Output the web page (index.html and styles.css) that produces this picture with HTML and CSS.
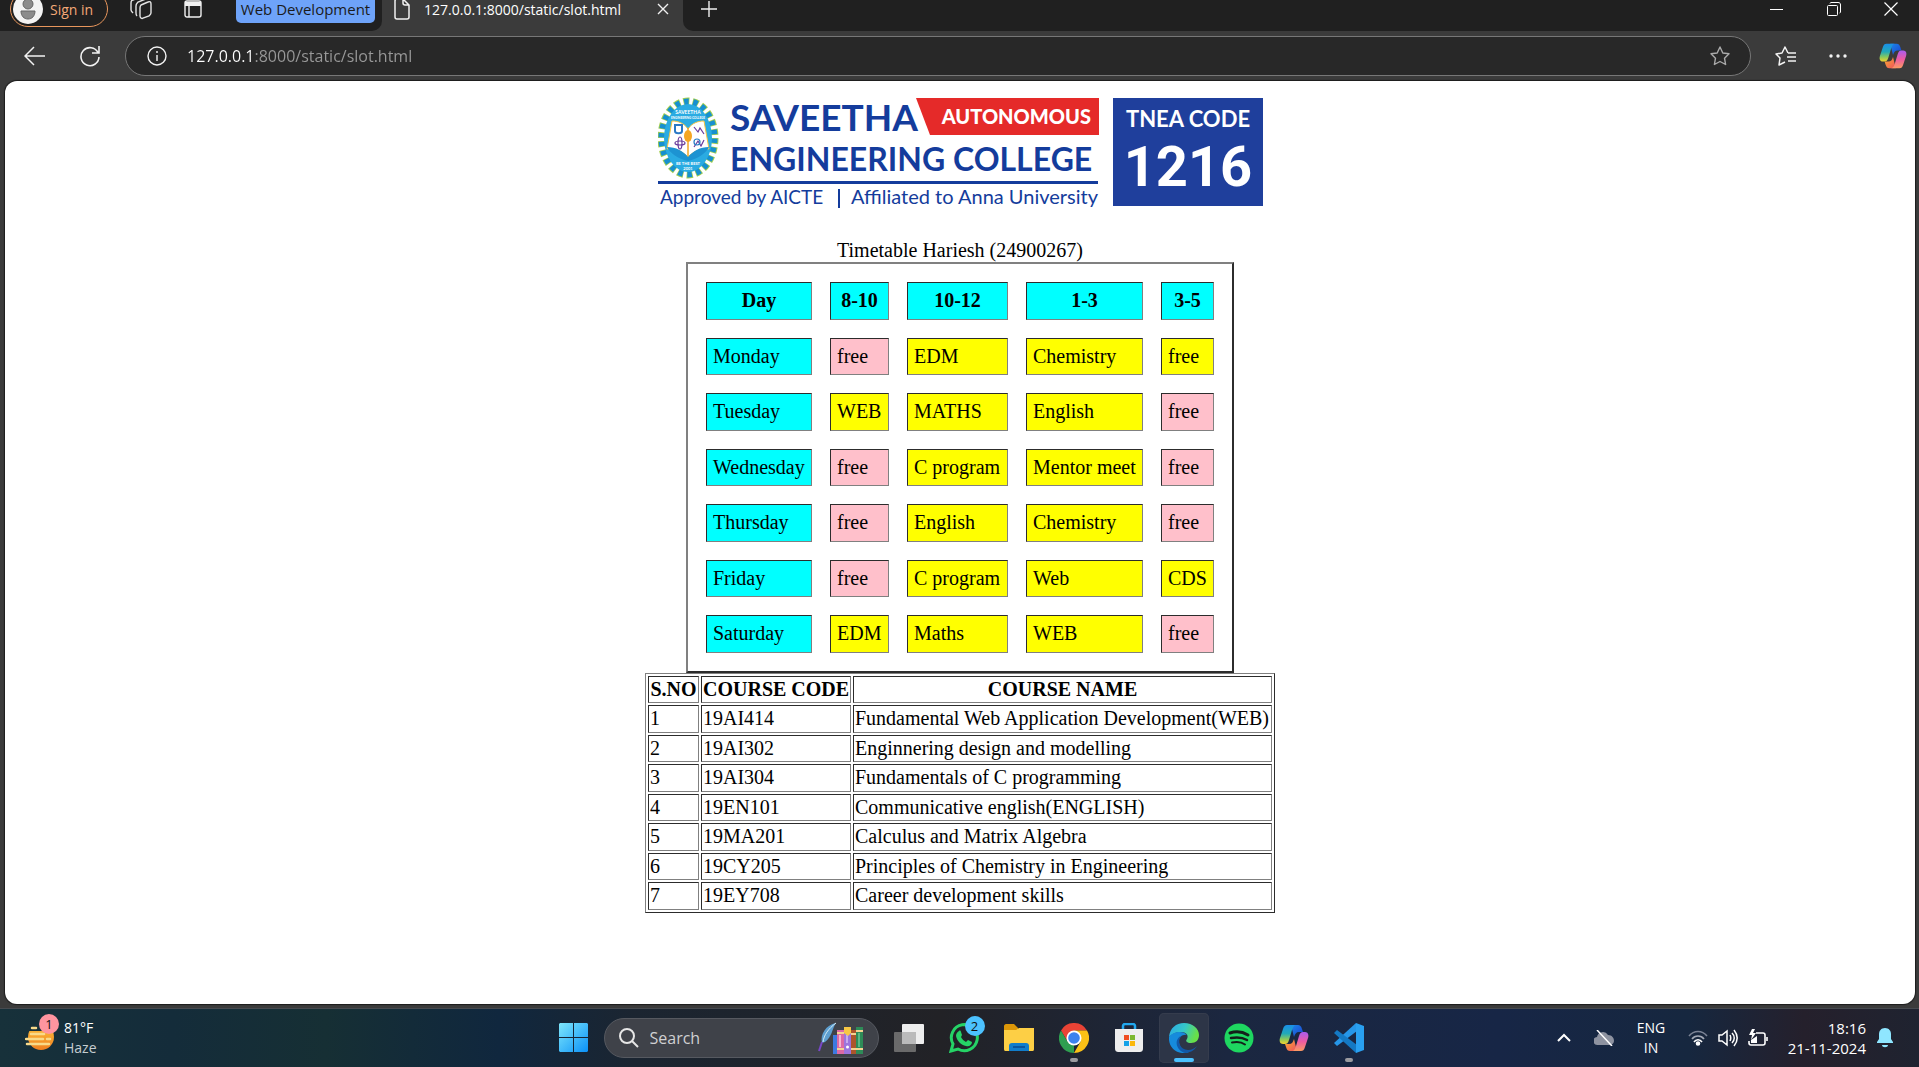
FILE: index.html
```html
<!DOCTYPE html>
<html lang="en">
<head>
<meta charset="utf-8">
<title>127.0.0.1:8000/static/slot.html</title>
<link rel="stylesheet" href="styles.css">
</head>
<body>
<svg class="defs" aria-hidden="true">
  <defs>
    <linearGradient id="cpA" x1="0" y1="0" x2="0" y2="1"><stop offset="0" stop-color="#1a8fe8"/><stop offset=".45" stop-color="#22a9b8"/><stop offset=".75" stop-color="#8cc95a"/><stop offset="1" stop-color="#f5d32e"/></linearGradient>
    <linearGradient id="cpB" x1="0" y1="0" x2="0" y2="1"><stop offset="0" stop-color="#a95cf0"/><stop offset=".5" stop-color="#ee5ba2"/><stop offset="1" stop-color="#fb9a62"/></linearGradient>
    <linearGradient id="cpC" x1="0" y1="0" x2="1" y2="1"><stop offset="0" stop-color="#1c86e8"/><stop offset="1" stop-color="#1b3fce"/></linearGradient>
    <linearGradient id="cpD" x1="0" y1="0" x2="1" y2="1"><stop offset="0" stop-color="#fbb02d"/><stop offset="1" stop-color="#ee4f5f"/></linearGradient>
    <symbol id="copilot" viewBox="0 0 30 28">
      <path fill="url(#cpC)" d="M12 1h7c2 0 3 1 4 4l1 3h-4c-3 0-4 2-5 5z"/>
      <path fill="url(#cpD)" d="M18 27h-7c-2 0-3-1-4-4l-1-3h4c3 0 4-2 5-5z"/>
      <path fill="url(#cpA)" d="M8 1h9c-2 0-3 2-4 5l-3 10c-1 3-2 4-4 4H4c-3 0-4-3-3-6L4 5c1-3 2-4 4-4z"/>
      <path fill="url(#cpB)" d="M22 27h-9c2 0 3-2 4-5l3-10c1-3 2-4 4-4h2c3 0 4 3 3 6l-3 9c-1 3-2 4-4 4z"/>
    </symbol>
  </defs>
</svg>

<header class="browser">
  <div class="tabstrip">
    <div class="tabstrip-left">
      <button class="signin" type="button">
        <svg width="30" height="30" viewBox="0 0 30 30"><circle cx="15" cy="15" r="15" fill="#f4f4f4"/><circle cx="15" cy="10" r="5" fill="#8c8c8c" stroke="#666"/><path d="M8 17h14c0 5-3 8-7 8s-7-3-7-8z" fill="#8c8c8c" stroke="#666"/></svg>
        <span>Sign in</span>
      </button>
      <button class="strip-icon" type="button" aria-label="Workspaces">
        <svg width="22" height="24" viewBox="0 0 22 24" fill="none" stroke="#e4e4e4" stroke-width="1.4"><path d="M11 8l7-3c2-1 3 0 3 2v9c0 1-1 2-2 3l-6 2c-1 1-3 0-3-2v-8c0-1 0-2 1-3zM7 19c-1-1-1-2-1-3V9c0-2 1-3 2-4l8-3M3 16c-1-1-2-2-2-3V6c0-2 1-3 2-3l8-3"/></svg>
      </button>
      <button class="strip-icon" type="button" aria-label="Tab actions">
        <svg width="18" height="20" viewBox="0 0 18 20" fill="none" stroke="#f0f0f0" stroke-width="1.4"><rect x="1" y="2" width="16" height="16" rx="2"/><path d="M5 7v11" /><path d="M1 5h16" stroke-width="4"/></svg>
      </button>
      <button class="group" type="button">Web Development</button>
    </div>
    <div class="tab">
      <svg width="16" height="22" viewBox="0 0 16 22" fill="none" stroke="#f0f0f0" stroke-width="1.5"><path d="M1 3c0-1 1-2 2-2h6l6 6v12c0 1-1 2-2 2H3c-1 0-2-1-2-2zM9 1v4c0 1 1 2 2 2h4"/></svg>
      <span class="tab-title">127.0.0.1:8000/static/slot.html</span>
      <button class="tab-close" type="button" aria-label="Close tab"><svg width="12" height="12" viewBox="0 0 12 12" stroke="#f0f0f0" stroke-width="1.4"><path d="M1 1l10 10M11 1L1 11"/></svg></button>
    </div>
    <div class="tabstrip-right">
      <button class="newtab" type="button" aria-label="New tab"><svg width="16" height="16" viewBox="0 0 16 16" stroke="#f0f0f0" stroke-width="1.4"><path d="M8 0v16M0 8h16"/></svg></button>
      <div class="window-controls">
        <button type="button" aria-label="Minimize"><svg width="14" height="14" viewBox="0 0 14 14" stroke="#fff"><path d="M0 7.500h13"/></svg></button>
        <button type="button" aria-label="Restore"><svg width="14" height="14" viewBox="0 0 14 14" fill="none" stroke="#fff"><rect x=".5" y="3.500" width="10" height="10" rx="1"/><path d="M3 1.500c0-1 1-1 1-1h7c2 0 2.500 1 2.500 2.500V10c0 1-1 1-1 1"/></svg></button>
        <button type="button" aria-label="Close window"><svg width="14" height="14" viewBox="0 0 14 14" stroke="#fff" stroke-width="1.200"><path d="M.5.5l13 13M13.500.5l-13 13"/></svg></button>
      </div>
    </div>
  </div>
  <div class="toolbar">
    <button type="button" aria-label="Back"><svg width="22" height="20" viewBox="0 0 22 20" fill="none" stroke="#f2f2f2" stroke-width="1.500"><path d="M21 10H1M10 1l-9 9 9 9"/></svg></button>
    <button type="button" aria-label="Refresh"><svg width="22" height="22" viewBox="0 0 22 22" fill="none" stroke="#f2f2f2" stroke-width="1.600"><path d="M19 7.500A9 9 0 1 0 20 12M20 1v7h-7"/></svg></button>
    <div class="address">
      <svg width="20" height="20" viewBox="0 0 20 20" fill="none" stroke="#f2f2f2" stroke-width="1.400"><circle cx="10" cy="10" r="9"/><path d="M10 9v6M10 5v2"/></svg>
      <input type="text" aria-label="Address" value="127.0.0.1:8000/static/slot.html">
      <button type="button" aria-label="Add to favorites"><svg width="22" height="22" viewBox="0 0 22 22" fill="none" stroke="#aaa" stroke-width="1.400" stroke-linejoin="round"><path d="M11 2l2.800 6 6.200.800-4.500 4.400 1.100 6.300L11 16.500l-5.600 3 1.100-6.300L2 8.800 8.200 8z"/></svg></button>
    </div>
    <div class="toolbar-actions">
      <button type="button" aria-label="Favorites"><svg width="22" height="22" viewBox="0 0 22 22" fill="none" stroke="#f2f2f2" stroke-width="1.500" stroke-linejoin="round"><path d="M13 8l-3-6-3 6-6 1 4 4-1 7 6-3M21 8h-8M12 12h9M13 16h8"/></svg></button>
      <button type="button" aria-label="Settings and more"><svg width="18" height="6" viewBox="0 0 18 6" fill="#f2f2f2"><circle cx="2" cy="3" r="1.700"/><circle cx="9" cy="3" r="1.700"/><circle cx="16" cy="3" r="1.700"/></svg></button>
      <button type="button" aria-label="Copilot"><svg width="28" height="28"><use href="#copilot"/></svg></button>
    </div>
  </div>
</header>

<main class="page">
  <svg class="logo" width="605" height="116" viewBox="0 0 605 116" role="img" aria-label="Saveetha Engineering College">
    <ellipse cx="30" cy="41" rx="26" ry="36" fill="none" stroke="#a4cf4f" stroke-width="9" pathLength="44" stroke-dasharray="1.300 .7"/>
    <ellipse cx="30" cy="41" rx="26" ry="36" fill="none" stroke="#1790cf" stroke-width="7" pathLength="44" stroke-dasharray="1 1" stroke-dashoffset="-.15"/>
    <ellipse cx="30" cy="41" rx="24" ry="34" fill="#2aabe2"/>
    <path d="M14 24c6 0 12 2 16 8 4-6 10-8 16-8l5 28c-8-1-15 2-21 8-6-6-13-9-21-8z" fill="#fff" stroke="#f5c542" stroke-width="1"/>
    <path d="M9 50c9 0 16 4 21 10 5-6 12-10 21-10-3 6-11 12-21 14-10-2-18-8-21-14z" fill="#1d93d2"/>
    <path d="M30 31v28" stroke="#f5a623" stroke-width="1.500"/><ellipse cx="30" cy="39" rx="4" ry="6" fill="#f5a623"/>
    <path d="M17 28h7v6c0 3-7 3-7 0z" fill="none" stroke="#2a78c5" stroke-width="2"/>
    <g fill="none" stroke="#683a9b" stroke-width="1.200"><ellipse cx="22" cy="46" rx="2" ry="6"/><ellipse cx="22" cy="46" rx="5" ry="2"/><path d="M36 30l4 5 2-4 4 6M36 50l4-6 3 5 3-6"/><circle cx="39" cy="45" r="3" stroke="#267cc5"/></g>
    <text class="seal" x="30" y="17" font-size="5">SAVEETHA</text>
    <text class="seal" x="30" y="22" font-size="3">ENGINEERING COLLEGE</text>
    <text class="seal" x="30" y="68" font-size="4">BE THE BEST</text>
    <text class="seal" x="30" y="73" font-size="4">2001</text>
    <text class="name" x="72" y="34" font-size="37">SAVEETHA</text>
    <text class="name" x="72" y="74" font-size="32">ENGINEERING COLLEGE</text>
    <path d="M258 1h183v37H272z" fill="#e52a29"/>
    <text class="autonomous" x="433" y="27" font-size="20">AUTONOMOUS</text>
    <path d="M0 84h440v3H0z" fill="#143c9c"/>
    <text class="approved" x="2" y="107" font-size="19">Approved by AICTE</text>
    <path d="M181 92v19" stroke="#143c9c" stroke-width="2"/>
    <text class="approved affiliated" x="440" y="107" font-size="20">Affiliated to Anna University</text>
    <path d="M455 1h150v108H455z" fill="#1f3f9c"/>
    <text class="code-label" x="530" y="30" font-size="22">TNEA CODE</text>
    <text class="code" x="530" y="89" font-size="56">1216</text>
  </svg>

  <table class="timetable">
    <caption>Timetable Hariesh (24900267)</caption>
    <colgroup><col class="c-day"><col class="c-first"><col class="c-second"><col class="c-third"><col class="c-fourth"></colgroup>
    <tr><th>Day</th><th>8-10</th><th>10-12</th><th>1-3</th><th>3-5</th></tr>
    <tr><td class="day">Monday</td><td class="free">free</td><td>EDM</td><td>Chemistry</td><td>free</td></tr>
    <tr><td class="day">Tuesday</td><td>WEB</td><td>MATHS</td><td>English</td><td class="free">free</td></tr>
    <tr><td class="day">Wednesday</td><td class="free">free</td><td>C program</td><td>Mentor meet</td><td class="free">free</td></tr>
    <tr><td class="day">Thursday</td><td class="free">free</td><td>English</td><td>Chemistry</td><td class="free">free</td></tr>
    <tr><td class="day">Friday</td><td class="free">free</td><td>C program</td><td>Web</td><td>CDS</td></tr>
    <tr><td class="day">Saturday</td><td>EDM</td><td>Maths</td><td>WEB</td><td class="free">free</td></tr>
  </table>

  <table class="courses">
    <colgroup><col class="c-no"><col class="c-code"><col class="c-name"></colgroup>
    <tr><th>S.NO</th><th>COURSE CODE</th><th>COURSE NAME</th></tr>
    <tr><td>1</td><td>19AI414</td><td>Fundamental Web Application Development(WEB)</td></tr>
    <tr><td>2</td><td>19AI302</td><td>Enginnering design and modelling</td></tr>
    <tr><td>3</td><td>19AI304</td><td>Fundamentals of C programming</td></tr>
    <tr><td>4</td><td>19EN101</td><td>Communicative english(ENGLISH)</td></tr>
    <tr><td>5</td><td>19MA201</td><td>Calculus and Matrix Algebra</td></tr>
    <tr><td>6</td><td>19CY205</td><td>Principles of Chemistry in Engineering</td></tr>
    <tr><td>7</td><td>19EY708</td><td>Career development skills</td></tr>
  </table>
</main>

<footer class="taskbar">
  <button class="weather" type="button">
    <span class="weather-icon">
      <svg width="30" height="28" viewBox="0 0 30 28"><defs><linearGradient id="sun" x1="0" y1="0" x2="0" y2="1"><stop offset="0" stop-color="#fcc23c"/><stop offset="1" stop-color="#f08020"/></linearGradient></defs><circle cx="16" cy="13" r="13" fill="url(#sun)"/><path d="M0 0h30v7H0z" fill="#17303a"/><g stroke="#f8da8a" stroke-width="2.500" stroke-linecap="round"><path d="M7 4h4M6 10h13M1 15h17M22 15h3M2 20h22"/></g></svg>
      <span class="badge pink">1</span>
    </span>
    <span class="weather-text"><span>81°F</span><span class="muted">Haze</span></span>
  </button>

  <nav class="apps" aria-label="Taskbar apps">
    <button type="button" aria-label="Start"><svg width="30" height="30" viewBox="0 0 30 30"><defs><linearGradient id="win" gradientUnits="userSpaceOnUse" x1="0" y1="0" x2="29" y2="29"><stop offset="0" stop-color="#7fe7fb"/><stop offset="1" stop-color="#0a91f8"/></linearGradient></defs><path fill="url(#win)" d="M1 0h13v14H0V1zM15 0h13l1 1v13H15zM0 15h14v14H1l-1-1zM15 15h14v13l-1 1H15z"/></svg></button>
    <label class="search">
      <svg width="20" height="20" viewBox="0 0 20 20" fill="none" stroke="#e6e6e6" stroke-width="2"><circle cx="8" cy="8" r="7"/><path d="M13 13l6 6"/></svg>
      <input type="search" placeholder="Search" aria-label="Search">
      <svg width="46" height="32" viewBox="0 0 46 32"><path d="M18 1C8 3 2 12 4 21l3-1C14 15 14 7 18 1z" fill="#5d9fd0"/><path d="M18 1C10 7 6 13 5 20" stroke="#d4ecf6" fill="none"/><path d="M4 20l-3 9" stroke="#7848c8" stroke-width="2"/><path fill="#3d7ae0" d="M15 13h5v19h-5z"/><path fill="#dc6aa5" d="M19 8h7v24h-7z"/><path fill="#f3b6d4" d="M21 13h2v12h-2z"/><path fill="#9b75dd" d="M26 5h7v27h-7z"/><path fill="#c4abf0" d="M28 13h2v8h-2z"/><path fill="#ad552b" d="M33 8h5v24h-5z"/><path fill="#2e8b57" d="M38 5h7v27h-7z"/><path fill="#5cb884" d="M40 11h2v14h-2z"/><path d="M19 11h7M19 27h7M33 12h5M33 27h5M38 9h7M38 27h7" stroke="#f4d391" stroke-width="2"/><path d="M26 5h7v6l-3 3-4-3z" fill="#f7c744"/><circle cx="29.500" cy="25" r="1.500" fill="#fff"/></svg>
    </label>
    <button type="button" aria-label="Task view"><svg width="30" height="28" viewBox="0 0 30 28"><rect x="8" width="22" height="20" rx="1" fill="#eee"/><rect y="8" width="22" height="20" rx="1" fill="#777" fill-opacity=".85"/><path fill="#bbb" d="M8 8h14v12H8z"/></svg></button>
    <button type="button" aria-label="WhatsApp">
      <svg width="30" height="30" viewBox="0 0 30 30"><path d="M2 28l2-7A13 13 0 1 1 9 26z" fill="none" stroke="#25d366" stroke-width="3"/><path d="M10 8c1-1 2 0 2 1l1 3-1 2c1 2 3 4 5 5l2-2 4 2c0 3-3 5-6 4-5-1-9-5-10-10 0-2 1-4 3-5z" fill="#25d366"/></svg>
      <span class="badge blue">2</span>
    </button>
    <button type="button" aria-label="File Explorer"><svg width="30" height="28" viewBox="0 0 30 28"><path d="M0 2c0-1 1-2 2-2h8l4 4v5H0z" fill="#dc9708"/><path d="M0 6h12l3-2h15v21c0 2-1 2-2 2H2c-1 0-2 0-2-2z" fill="#fdcf45"/><path d="M5 27v-5c0-2 1-3 3-3h14c2 0 3 1 3 3v5z" fill="#117dcb"/><path d="M9 23h12" stroke="#0a569f" stroke-width="2"/></svg></button>
    <button class="open" type="button" aria-label="Chrome"><svg width="30" height="30" viewBox="0 0 30 30"><path d="M2 7.500a15 15 0 0 1 26 0H15l-6.500 11z" fill="#e94335"/><path d="M2 7.500l6.500 11.250L15 22.500 15 30A15 15 0 0 1 2 7.500z" fill="#2f9e50"/><path d="M28 7.500H15l6.500 11.250L15 30A15 15 0 0 0 28 7.500z" fill="#fbc116"/><circle cx="15" cy="15" r="7.500" fill="#fff"/><circle cx="15" cy="15" r="5.800" fill="#3c82ee"/></svg></button>
    <button type="button" aria-label="Microsoft Store"><svg width="30" height="30" viewBox="0 0 30 30"><path d="M9 7V3c0-1 1-2 2-2h8c1 0 2 1 2 2v4" fill="none" stroke="#22a8ee" stroke-width="2.500"/><path d="M1 6h28v19c0 3-1 4-4 4H5c-3 0-4-1-4-4z" fill="#eee"/><path fill="#f04e23" d="M10 12h5v5h-5z"/><path fill="#7cb82f" d="M16 12h5v5h-5z"/><path fill="#14a2e8" d="M10 18h5v5h-5z"/><path fill="#fbb80b" d="M16 18h5v5h-5z"/></svg></button>
    <button class="active" type="button" aria-label="Edge"><svg width="30" height="30" viewBox="0 0 30 30"><defs><linearGradient id="eg" x1="0" y1="0" x2="1" y2=".3"><stop offset="0" stop-color="#2aa8e8"/><stop offset=".55" stop-color="#35c8c8"/><stop offset="1" stop-color="#68e048"/></linearGradient></defs><path d="M0 14C1 5 7 0 15 0c9 0 15 6 15 12 0 5-3 8-8 8-4 0-6-2-4-4 2-4-1-7-6-7C6 9 2 12 0 14z" fill="url(#eg)"/><path d="M0 14c2-3 6-5 11-5 3 0 5 1 7 3-5-1-9 3-8 8 1 6 6 9 10 9-11 4-21-4-20-15z" fill="#168bdc"/><path d="M12 13c-4 5-1 14 7 14 4 0 7-2 9-4-3 5-8 7-12 7-8-2-12-13-4-17z" fill="#1259a8"/></svg></button>
    <button type="button" aria-label="Spotify"><svg width="30" height="30" viewBox="0 0 30 30"><circle cx="15" cy="15" r="14.500" fill="#1ed760"/><g fill="none" stroke="#14201a" stroke-linecap="round"><path d="M6 10c6-2 13-1 18 2" stroke-width="3"/><path d="M7 15c5-1 11-1 16 2" stroke-width="2.500"/><path d="M8 19.500c5-1 9-1 13 2" stroke-width="2"/></g></svg></button>
    <button type="button" aria-label="Copilot"><svg width="30" height="28"><use href="#copilot"/></svg></button>
    <button class="open" type="button" aria-label="Visual Studio Code"><svg width="30" height="30" viewBox="0 0 30 30"><path d="M22 0L0 20l3 3L23 8z" fill="#2696e8"/><path d="M22 30L0 10l3-3 20 15z" fill="#1479c4"/><path d="M22 0l8 3v24l-8 3z" fill="#29a0f0"/></svg></button>
  </nav>

  <div class="tray">
    <button type="button" aria-label="Show hidden icons"><svg width="14" height="10" viewBox="0 0 14 10" fill="none" stroke="#fff" stroke-width="2"><path d="M1 8l6-6 6 6"/></svg></button>
    <svg class="cloud" width="20" height="16" viewBox="0 0 20 16"><path d="M4 15a4 4 0 0 1-1-8 6 6 0 0 1 11-2c4 0 6 3 6 6 0 2-2 4-4 4z" fill="#8d92a0"/><path d="M3 0l15 16" stroke="#fff" stroke-width="1.500"/></svg>
    <button class="lang" type="button"><span>ENG</span><span>IN</span></button>
    <button class="status" type="button" aria-label="Network, volume and battery">
      <svg width="20" height="16" viewBox="0 0 20 16" fill="none" stroke="#fff" stroke-width="1.600"><path d="M1 6c5-6 13-6 18 0" stroke="#7c8496"/><path d="M4 9c3-4 9-4 12 0" stroke="#a5abb8"/><path d="M6 12c2-3 6-3 8 0"/><circle cx="10" cy="13.500" r="1.500" fill="#fff"/></svg>
      <svg width="20" height="18" viewBox="0 0 20 18" fill="none" stroke="#fff" stroke-width="1.500"><path d="M1 6h3l5-4v14l-5-4H1zM12 6c1 2 1 4 0 6M14 4c3 3 3 7 0 10M16 1c4 5 4 11 0 16"/></svg>
      <svg width="20" height="18" viewBox="0 0 20 18" fill="none" stroke="#fff" stroke-width="1.600"><path d="M8 4h7c2 0 2 1 2 2v8c0 1 0 2-2 2H3c-2 0-2-1-2-2v-2M19 8v4"/><path d="M4 0l-3 6h3l-1 5 5-7H5l2-4z" fill="#fff" stroke="none"/><path d="M3 14V11l6-4v7z" fill="#fff" stroke="none"/></svg>
    </button>
    <button class="clock" type="button"><span>18:16</span><span>21-11-2024</span></button>
    <button type="button" aria-label="Notifications"><svg width="16" height="20" viewBox="0 0 16 20" fill="#8fe6ff"><path d="M8 0c4 0 6 3 6 6v5l2 3v1H0v-1l2-3V6c0-3 2-6 6-6zM5 17h6c0 3-6 3-6 0z"/></svg></button>
  </div>
</footer>
</body>
</html>
```
FILE: styles.css
```css
* { box-sizing: border-box; }

body {
  margin: 0;
  min-height: 100vh;
  display: flex;
  flex-direction: column;
  background: #3b3b3b;
  font-family: "Open Sans", "Noto Sans", sans-serif;
  font-size: 15px;
  color: #fff;
}

.defs { position: absolute; width: 0; height: 0; }

button {
  display: flex;
  align-items: center;
  justify-content: center;
  padding: 0;
  border: 0;
  background: none;
  color: inherit;
  font: inherit;
  white-space: nowrap;
}

svg { display: block; flex: none; }

/* Tab strip: the window's upper edge cuts its contents */
.tabstrip {
  height: 31px;
  display: flex;
  align-items: flex-end;
  overflow: hidden;
}

.tabstrip-left,
.tabstrip-right,
.tab {
  height: 44px;
  display: flex;
  align-items: center;
  flex: none;
}

.tabstrip-left {
  width: 382px;
  padding-left: 10px;
  background: #202020;
  border-bottom-right-radius: 10px;
}

.signin {
  width: 98px;
  height: 36px;
  padding-left: 2px;
  gap: 7px;
  justify-content: flex-start;
  border: 1px solid #e8965c;
  border-radius: 18px;
  color: #f3a877;
  font-size: 14px;
}

.strip-icon { width: 22px; margin-left: 22px; }
.strip-icon + .strip-icon { margin-left: 30px; }

.group {
  width: 139px;
  height: 28px;
  margin-left: 32px;
  border-radius: 5px;
  background: #6ea3f9;
  color: #1b1b1b;
}

.tab {
  width: 301px;
  padding: 0 14px 0 12px;
  gap: 14px;
  font-size: 14px;
}

.tab-title { flex: 1; white-space: nowrap; }

.tabstrip-right {
  flex: 1;
  justify-content: space-between;
  padding: 0 21px 0 18px;
  background: #202020;
  border-bottom-left-radius: 10px;
}

.window-controls { display: flex; gap: 43px; }

/* Toolbar */
.toolbar {
  height: 50px;
  display: flex;
  align-items: center;
  padding: 0 12px 1px 24px;
  gap: 33px;
}

.address {
  flex: 1;
  height: 40px;
  margin-left: -9px;
  padding: 0 19px 0 21px;
  display: flex;
  align-items: center;
  gap: 20px;
  border: 1px solid #777;
  border-radius: 20px;
  background: #282828;
}

/* The host is white and the rest of the address grey */
.address input {
  flex: 1;
  min-width: 0;
  height: 30px;
  padding: 0;
  border: 0;
  outline: 0;
  background: linear-gradient(to right, #fff 65px, #999 65px);
  -webkit-background-clip: text;
  background-clip: text;
  color: transparent;
  font: inherit;
  font-size: 16px;
}

.toolbar-actions {
  display: flex;
  align-items: center;
  gap: 32px;
  margin-left: -9px;
}

/* Page */
.page {
  flex: 1;
  margin: 0 4px 4px 5px;
  padding: 16px 8px;
  display: flex;
  flex-direction: column;
  align-items: center;
  border-radius: 12px;
  background: #fff;
  box-shadow: 0 0 1px 1px #1c1c1c;
  color: #000;
  font-family: "Liberation Serif", serif;
  font-size: 20px;
  line-height: 23px;
}

.logo {
  margin-bottom: 26px;
  fill: #143c9c;
  font-family: "Lato", sans-serif;
}

.seal { fill: #fff; text-anchor: middle; font-weight: 700; }
.name { font-weight: 700; }
.autonomous { fill: #fff; text-anchor: end; font-weight: 900; }
.affiliated { text-anchor: end; }
.code-label { fill: #fff; text-anchor: middle; font-weight: 700; }
.code { fill: #fff; text-anchor: middle; font-family: "Roboto", sans-serif; font-weight: 700; }

table {
  table-layout: fixed;
  border-style: solid;
  border-color: #808080 #2c2c2c #2c2c2c #808080;
}

th, td {
  border: 1px solid;
  border-color: #2c2c2c #808080 #808080 #2c2c2c;
  text-align: left;
  white-space: nowrap;
}

th { text-align: center; }

.timetable { width: 548px; border-width: 2px; border-spacing: 18px; }
.timetable th, .timetable td { padding: 6px; background: #ff0; }
.timetable tr:nth-child(odd) > * { padding-bottom: 7px; }
.timetable th, .timetable .day { background: #0ff; }
.timetable .free { background: #ffc0cb; }
.c-day { width: 106px; }
.c-first { width: 59px; }
.c-second { width: 101px; }
.c-third { width: 117px; }
.c-fourth { width: 53px; }

.courses { width: 630px; border-width: 1px; border-spacing: 2px; }
.courses th, .courses td { padding: 1px; }
.courses tr:nth-child(even) > * { padding-bottom: 2px; }
.c-no { width: 51px; }
.c-code { width: 150px; }
.c-name { width: 419px; }

/* Taskbar */
.taskbar {
  height: 59px;
  display: grid;
  grid-template-columns: 1fr auto 1fr;
  align-items: center;
  border-top: 1px solid #474b50;
  background: linear-gradient(to right, #17313a 0%, #142c3a 9%, #162f34 17%, #10273e 26%, #1b2531 33%, #222226 49%, #1b2740 64%, #172646 78%, #16273f 88%, #25202c 94%, #1f2330 100%);
}

.weather { justify-self: start; padding-left: 25px; gap: 9px; }
.weather-icon { position: relative; }
.weather-text { display: flex; flex-direction: column; align-items: flex-start; line-height: 20px; font-size: 14px; }
.muted { color: #c5cdd0; }

.badge {
  position: absolute;
  width: 20px;
  height: 20px;
  border-radius: 50%;
  color: #111;
  font-size: 13px;
  line-height: 20px;
  text-align: center;
}

.pink { top: -10px; right: -4px; background: #ff949f; }
.blue { top: 3px; right: 4px; background: #4cc2ff; }

.apps { display: flex; align-items: center; gap: 5px; padding-left: 3px; }
.apps button { position: relative; width: 50px; height: 50px; border-radius: 5px; }
.apps .active { background: #2d3547; box-shadow: 0 0 0 1px #353c4d inset; }

.apps .open::after,
.apps .active::after {
  content: "";
  position: absolute;
  bottom: 1px;
  width: 8px;
  height: 4px;
  border-radius: 2px;
  background: #9b9ba0;
}

.apps .active::after { width: 20px; background: #4cc2ff; }

.search {
  width: 275px;
  height: 40px;
  padding: 0 14px 0 14px;
  display: flex;
  align-items: center;
  gap: 11px;
  border: 1px solid #565960;
  border-radius: 20px;
  background: #3f4249;
}

.search input {
  flex: 1;
  min-width: 0;
  padding: 0;
  border: 0;
  background: none;
  color: #fff;
  font: inherit;
  font-size: 16px;
}

.search input::placeholder { color: #d0d0d2; }

.tray {
  justify-self: end;
  display: flex;
  align-items: center;
  gap: 23px;
  padding-right: 26px;
  font-size: 14px;
  line-height: 20px;
}

.lang, .clock { flex-direction: column; }
.lang { width: 28px; }
.status { gap: 10px; }
.clock { width: 78px; margin-right: -12px; margin-left: -3px; align-items: flex-end; font-size: 15px; line-height: 20px; }
```
